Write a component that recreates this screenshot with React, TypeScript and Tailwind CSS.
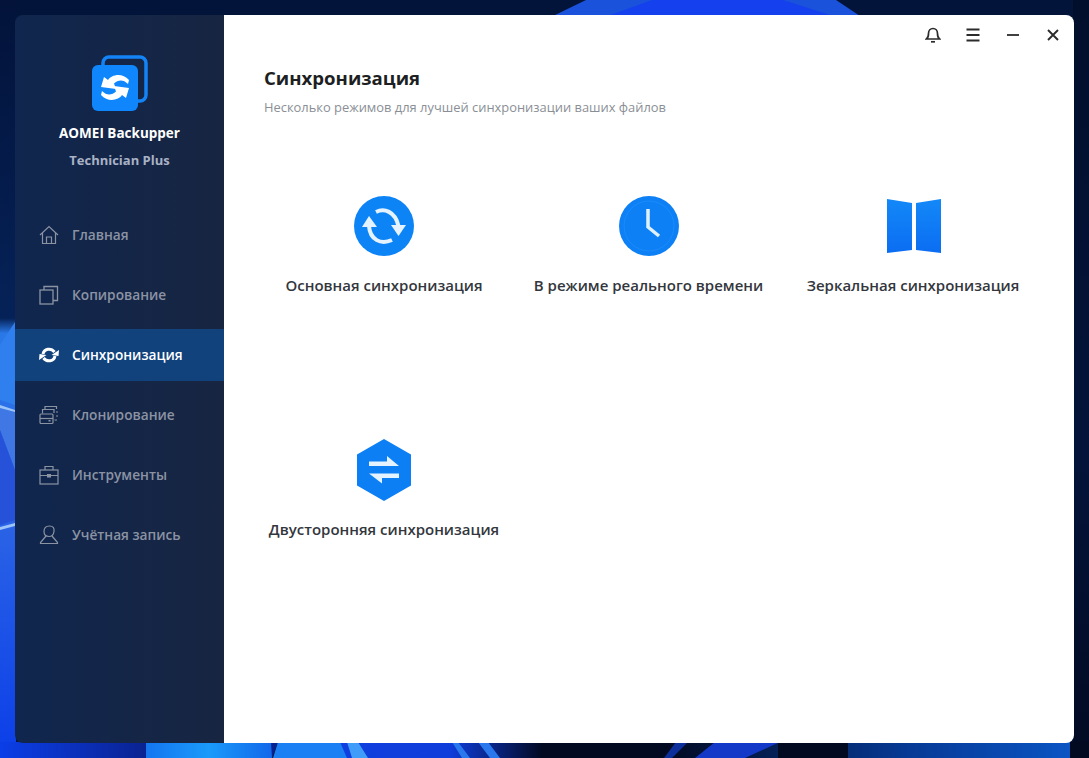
import React from "react";

const Wallpaper = () => (
  <svg className="absolute inset-0" width="1089" height="758" viewBox="0 0 1089 758">
    <defs>
      <linearGradient id="lft" x1="0" y1="0" x2="0" y2="1">
        <stop offset="0" stopColor="#03133a" />
        <stop offset="0.42" stopColor="#052258" />
        <stop offset="0.44" stopColor="#2a78e8" />
        <stop offset="0.7" stopColor="#2a62e6" />
        <stop offset="1" stopColor="#0b3ee8" />
      </linearGradient>
      <linearGradient id="rgt" x1="0" y1="0" x2="0" y2="1">
        <stop offset="0" stopColor="#020f2c" />
        <stop offset="0.6" stopColor="#03143a" />
        <stop offset="1" stopColor="#020a22" />
      </linearGradient>
      <linearGradient id="botL" x1="0" y1="0" x2="1" y2="0">
        <stop offset="0" stopColor="#0b3ee8" />
        <stop offset="1" stopColor="#0a2290" />
      </linearGradient>
      <linearGradient id="botR" x1="0" y1="0" x2="1" y2="0">
        <stop offset="0" stopColor="#020a22" />
        <stop offset="0.6" stopColor="#073a96" />
        <stop offset="1" stopColor="#0a55c4" />
      </linearGradient>
      <linearGradient id="bright" x1="0" y1="0" x2="1" y2="0">
        <stop offset="0" stopColor="#1476f0" />
        <stop offset="0.5" stopColor="#1a9afa" />
        <stop offset="1" stopColor="#1268ea" />
      </linearGradient>
      <linearGradient id="fade" x1="0" y1="0" x2="1" y2="0">
        <stop offset="0" stopColor="#1040e0" />
        <stop offset="0.65" stopColor="#0f3ddc" />
        <stop offset="1" stopColor="#020a22" />
      </linearGradient>
    </defs>
    <rect width="1089" height="758" fill="#03143a" />
    <rect x="0" y="0" width="16" height="758" fill="url(#lft)" />
    <rect x="1073" y="0" width="16" height="758" fill="url(#rgt)" />
    <rect x="0" y="742" width="148" height="16" fill="url(#botL)" />
    <rect x="146" y="742" width="126" height="16" fill="url(#bright)" />
    <polygon points="272,758 278,742 271,742" fill="#0a2290" />
    <rect x="278" y="742" width="264" height="16" fill="url(#fade)" />
    <polygon points="278,742 340,742 347,758 273,758" fill="#1a80f4" />
    <polygon points="347,742 358,742 368,758 352,758" fill="#3f9cf8" />
    <polygon points="452,742 458,742 470,758 462,758" fill="#2a78ee" />
    <polygon points="478,742 488,742 500,758 490,758" fill="#2a78ee" />
    <rect x="542" y="742" width="125" height="16" fill="#020a22" />
    <rect x="667" y="742" width="406" height="16" fill="url(#botR)" />
    <polygon points="676,742 688,742 672,758 664,758" fill="#0d2f9c" />
    <polygon points="715,742 780,742 745,758 695,758" fill="#1438c8" />
    <rect x="778" y="742" width="70" height="16" fill="#020a22" />
    <rect x="1070" y="742" width="19" height="16" fill="#020a22" />
    <polygon points="553,16 586,0 836,0 860,16" fill="#1a52dc" />
    <polygon points="608,16 652,0 783,0 833,16" fill="#1440ee" />
    <polygon points="0,345 15,322 15,405 0,400" fill="#2f80ee" />
    <polygon points="0,408 15,412 15,470 0,430" fill="#3f78e4" />
    <polygon points="0,430 15,470 15,520 0,525" fill="#2552d8" />
    <polygon points="0,527 15,523 15,526 0,530" fill="#9cc4f8" />
    <polygon points="0,405 15,410 15,412 0,408" fill="#9cc4f8" />
  </svg>
);

const RefreshLogo = () => (
  <svg width="56" height="56" viewBox="0 0 56 56" className="block">
    <rect x="11" y="2" width="43" height="44" rx="6" fill="none" stroke="#1383f6" strokeWidth="3.5" />
    <rect x="0" y="10" width="46" height="46" rx="6" fill="#0f86fb" />
    <g fill="#fff">
      <path d="M12 22 L16 25 C19 20 30 17 37 25 L36 29 C31 24 26 25 22 28.5 L24 34 L9 32 Z" />
      <path d="M12 22 L16 25 C19 20 30 17 37 25 L36 29 C31 24 26 25 22 28.5 L24 34 L9 32 Z" transform="rotate(180 23 32.5)" />
    </g>
  </svg>
);

const Home = () => (
  <svg width="20" height="20" viewBox="0 0 20 20" fill="none" stroke="currentColor" strokeWidth="1.2">
    <path d="M1 10 L10 1.5 L19 10" />
    <path d="M3.5 8 V18.5 H16.5 V8" />
    <path d="M7.5 18.5 V12 H12.5 V18.5" />
  </svg>
);
const Copy = () => (
  <svg width="20" height="20" viewBox="0 0 20 20" fill="none" stroke="currentColor" strokeWidth="1.3">
    <rect x="1" y="5" width="13" height="14" />
    <path d="M5 5 V1.5 H18.5 V15.5 H14" />
  </svg>
);
const Sync = () => (
  <svg width="20" height="20" viewBox="0 0 20 20" fill="none" stroke="currentColor" strokeWidth="3">
    <path d="M4 9 C5 3.5 12 2.5 15.5 7" />
    <path d="M16 11 C15 16.5 8 17.5 4.5 13" />
    <path d="M20 5 L19.5 11 L12.5 10 Z" fill="currentColor" stroke="none" />
    <path d="M0 15 L0.5 9 L7.5 10 Z" fill="currentColor" stroke="none" />
  </svg>
);
const Clone = () => (
  <svg width="20" height="20" viewBox="0 0 20 20" fill="none" stroke="currentColor" strokeWidth="1.2">
    <rect x="1" y="9" width="13" height="9.5" rx="1" />
    <path d="M1 13.5 H14" />
    <path d="M3.5 8.5 V4.5 H15 V8" />
    <path d="M6 4 V1.5 H17.5 V4" />
    <path d="M17 7 H19 M17 11 H19 M15.5 15 H18" />
    <rect x="9.5" y="15" width="2" height="1.5" fill="currentColor" stroke="none" />
  </svg>
);
const Tools = () => (
  <svg width="20" height="20" viewBox="0 0 20 20" fill="none" stroke="currentColor" strokeWidth="1.2">
    <rect x="1" y="5" width="18" height="14" />
    <path d="M6 5 V1.5 H14 V5" />
    <path d="M1 10.5 H8 M12 10.5 H19" />
    <rect x="8" y="9" width="4" height="3.5" fill="currentColor" stroke="none" />
  </svg>
);
const User = () => (
  <svg width="20" height="20" viewBox="0 0 20 20" fill="none" stroke="currentColor" strokeWidth="1.2">
    <path d="M5 6.5 C5 3 7 1 10.5 1 C14 1 15.5 3 15 6.5 C14.5 10 12.5 11.5 10 11.5 C7 11.5 5 10 5 6.5 Z" />
    <path d="M7 11 L1.5 17.5 V18.5 H18.5 V17.5 L13 11" />
  </svg>
);

const items = [
  { label: "Главная", Icon: Home },
  { label: "Копирование", Icon: Copy },
  { label: "Синхронизация", Icon: Sync, active: true },
  { label: "Клонирование", Icon: Clone },
  { label: "Инструменты", Icon: Tools },
  { label: "Учётная запись", Icon: User },
];

const BasicIcon = () => (
  <svg width="60" height="60" viewBox="0 0 60 60">
    <circle cx="30" cy="30" r="30" fill="#0d84f5" />
    <path d="M22 16 C30 12 41 15 44.5 30" fill="none" stroke="#e4f3ff" strokeWidth="4" />
    <path d="M15 30 C16 44 27 49 38 44" fill="none" stroke="#e4f3ff" strokeWidth="4" />
    <polygon points="37,29 52,29 44.5,40" fill="#e4f3ff" />
    <polygon points="8,31 23,31 15,20" fill="#e4f3ff" />
  </svg>
);
const ClockIcon = () => (
  <svg width="60" height="60" viewBox="0 0 60 60">
    <circle cx="30" cy="30" r="30" fill="#0d80f6" />
    <circle cx="30" cy="30" r="25" fill="none" stroke="#1a8bfa" strokeWidth="1" />
    <path d="M29 13 V31 L40 40" fill="none" stroke="#dff1ff" strokeWidth="3.5" />
  </svg>
);
const MirrorIcon = () => (
  <svg width="57" height="54" viewBox="-2 0 57 54">
    <defs>
      <linearGradient id="mir" x1="0" y1="0" x2="0" y2="1">
        <stop offset="0" stopColor="#1388f8" />
        <stop offset="1" stopColor="#0b6df2" />
      </linearGradient>
    </defs>
    <polygon points="0,0 25,4 25,51 0,54" fill="url(#mir)" />
    <polygon points="29,4 54,0 54,54 29,51" fill="url(#mir)" />
  </svg>
);
const TwoWayIcon = () => (
  <svg width="56" height="62" viewBox="0 0 56 62">
    <polygon points="28,0 55,15.5 55,46.5 28,62 1,46.5 1,15.5" fill="#0d7ff5" />
    <polygon points="13,22.5 31,22.5 31,17 43,27 13,27" fill="#e4f3ff" />
    <polygon points="13,34.5 43,34.5 43,39 26,39 26,44.5" fill="#e4f3ff" />
  </svg>
);

const cards = [
  { label: "Основная синхронизация", Icon: BasicIcon },
  { label: "В режиме реального времени", Icon: ClockIcon },
  { label: "Зеркальная синхронизация", Icon: MirrorIcon },
  { label: "Двусторонняя синхронизация", Icon: TwoWayIcon },
];

export default function App() {
  return (
    <div className="relative w-[1089px] h-[758px] overflow-hidden font-['Open_Sans','Noto_Sans',sans-serif]">
      <Wallpaper />
      <div className="relative flex w-full h-full p-[15px]">
        <aside className="w-[209px] h-full shrink-0 rounded-l-[8px] flex flex-col bg-gradient-to-r from-[#10264e] to-[#172541]">
          <div className="flex flex-col items-center pt-[40px]">
            <RefreshLogo />
            <div className="mt-[12px] text-[13.5px] leading-[20px] font-bold text-white">AOMEI Backupper</div>
            <div className="mt-[7px] text-[13px] leading-[20px] font-bold text-[#a9b2c5]">Technician Plus</div>
          </div>
          <nav className="mt-[39px] flex flex-col gap-[8px]">
            {items.map(({ label, Icon, active }) => (
              <div
                key={label}
                className={
                  active
                    ? "h-[52px] flex items-center pl-[24px] gap-[13px] bg-[#11427c] text-white"
                    : "h-[52px] flex items-center pl-[24px] gap-[13px] text-[#8b93a3]"
                }
              >
                <Icon />
                <span className="text-[13.7px] font-semibold">{label}</span>
              </div>
            ))}
          </nav>
        </aside>
        <main className="relative flex-1 h-full bg-white rounded-r-[8px] pl-[40px] pt-[49px]">
          <div className="absolute top-[12px] right-[13px] flex items-center gap-[24px] text-[#2b2b2b]">
            <svg width="16" height="16" viewBox="0 0 16 16" fill="none" stroke="currentColor" strokeWidth="1.7">
              <path d="M1.5 12 C3.5 10.5 3.5 8 3.5 6.5 C3.5 3.5 5.5 1.5 8 1.5 C10.5 1.5 12.5 3.5 12.5 6.5 C12.5 8 12.5 10.5 14.5 12 Z" />
              <path d="M6 14.8 H10" />
            </svg>
            <svg width="16" height="16" viewBox="0 0 16 16" fill="none" stroke="currentColor" strokeWidth="1.8">
              <path d="M1.5 2.5 H14.5 M1.5 8 H14.5 M1.5 13.5 H14.5" />
            </svg>
            <svg width="16" height="16" viewBox="0 0 16 16" fill="none" stroke="currentColor" strokeWidth="1.8">
              <path d="M2 8 H14" />
            </svg>
            <svg width="16" height="16" viewBox="0 0 16 16" fill="none" stroke="currentColor" strokeWidth="1.9">
              <path d="M3 3 L13 13 M13 3 L3 13" />
            </svg>
          </div>
          <h1 className="text-[18.6px] leading-[28px] font-bold text-[#1d1f23]">Синхронизация</h1>
          <p className="mt-[6px] text-[12.9px] leading-[18px] text-[#8a8f96]">
            Несколько режимов для лучшей синхронизации ваших файлов
          </p>
          <div className="mt-[80px] -ml-[40px] pl-[28px] grid grid-cols-[264px_265px_264px] auto-rows-[244px]">
            {cards.map(({ label, Icon }) => (
              <div key={label} className="flex flex-col items-center">
                <div className="h-[60px] flex items-center justify-center">
                  <Icon />
                </div>
                <div className="mt-[18px] text-[15px] leading-[22px] font-semibold text-[#33373d] whitespace-nowrap">
                  {label}
                </div>
              </div>
            ))}
          </div>
        </main>
      </div>
    </div>
  );
}
